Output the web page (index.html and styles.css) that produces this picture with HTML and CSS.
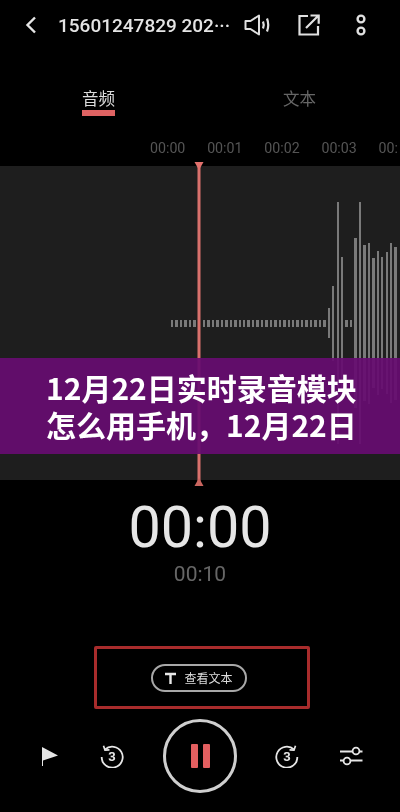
FILE: index.html
```html
<!DOCTYPE html>
<html lang="zh">
<head>
<meta charset="utf-8">
<title>录音</title>
<link rel="stylesheet" href="styles.css">
</head>
<body>
<div class="screen">
  <header class="topbar">
    <svg class="back" width="12" height="18" viewBox="0 0 12 18"><path d="M10 1.500 2.500 9l7.500 7.500" fill="none" stroke="#e6e6e6" stroke-width="2.400"/></svg>
    <div class="title">15601247829 202···</div>
    <svg class="speaker" width="26" height="26" viewBox="0 0 26 26" fill="none" stroke="#e0e0e0" stroke-width="2"><path d="M1.500 9h5L15 3.500v19L6.500 17h-5z" stroke-linejoin="round"/><path d="M19 9.500q1.500 3.500 0 7" stroke-width="2.200"/><path d="M23 6.500q2.500 6.500 0 13" stroke-width="2.200"/></svg>
    <svg class="share" width="22" height="22" viewBox="0 0 22 22" fill="none" stroke="#e0e0e0" stroke-width="2.200"><path d="M10 2H1.500v18.500H20V12"/><path d="M8 14 20 2M12.500 1.500h8.200v8.200"/></svg>
    <svg class="more" width="12" height="22" viewBox="0 0 12 22" fill="none" stroke="#e0e0e0" stroke-width="2.400"><circle cx="6" cy="5" r="3.400"/><circle cx="6" cy="17" r="3.400"/></svg>
  </header>

  <nav class="tabs">
    <div class="tab tab-active">音频</div>
    <div class="tab">文本</div>
  </nav>

  <div class="ticks">
    <span>00:00</span><span>00:01</span><span>00:02</span><span>00:03</span><span>00:</span>
  </div>

  <section class="wave">
    <div class="bars bars-a">
      <i style="height:7px"></i><i style="height:7px"></i><i style="height:7px"></i><i style="height:7px"></i><i style="height:7px"></i><i style="height:7px"></i>
    </div>
    <div class="bars bars-b">
      <i style="height:7px"></i><i style="height:7px"></i><i style="height:7px"></i><i style="height:7px"></i><i style="height:7px"></i><i style="height:7px"></i><i style="height:7px"></i>
      <i style="height:7px"></i><i style="height:7px"></i><i style="height:7px"></i><i style="height:7px"></i><i style="height:7px"></i><i style="height:7px"></i><i style="height:7px"></i>
      <i style="height:7px"></i><i style="height:7px"></i><i style="height:7px"></i><i style="height:7px"></i><i style="height:7px"></i><i style="height:7px"></i><i style="height:7px"></i>
      <i style="height:7px"></i><i style="height:7px"></i><i style="height:7px"></i><i style="height:7px"></i><i style="height:7px"></i><i style="height:7px"></i><i style="height:7px"></i>
      <i style="height:30px"></i><i style="height:75px"></i><i style="height:242px"></i><i style="height:132px"></i>
      <i style="height:7px"></i><i style="height:7px"></i>
      <i style="height:170px"></i><i style="height:242px"></i><i style="height:156px"></i><i style="height:161px"></i><i style="height:130px"></i><i style="height:144px"></i><i style="height:132px"></i><i style="height:142px"></i><i style="height:160px"></i><i style="height:153px"></i>
    </div>
    <svg class="playhead" width="12" height="326" viewBox="0 0 12 326">
      <rect x="4.500" y="2" width="3" height="320" fill="#d9716c"/>
      <path d="M1.500 1h9L6 9z" fill="#e2716d"/>
      <path d="M1.500 325h9L6 317z" fill="#c9655f"/>
    </svg>
  </section>

  <div class="clock">00:00</div>
  <div class="total">00:10</div>

  <div class="highlight">
    <div class="pill">
      <svg width="11" height="12" viewBox="0 0 11 12" fill="none" stroke="#e8e8e8" stroke-width="2.400"><path d="M0 2h11M5.500 2v10"/></svg>
      <span>查看文本</span>
    </div>
  </div>

  <footer class="controls">
    <svg class="ctl-flag" width="18" height="21" viewBox="0 0 18 21"><path d="M1 1 17 9.500 2 14.500V20H1z" fill="#e6e6e6"/></svg>
    <svg class="ctl-back" width="24" height="24" viewBox="0 0 24 24" fill="none" stroke="#e6e6e6" stroke-width="1.800"><path d="M5 5.500A10.500 10.500 0 1 1 1.700 13"/><path d="M3.500 1.800 5 6.200l4.500-.4" stroke-width="1.700"/><text x="12" y="17" text-anchor="middle" class="num">3</text></svg>
    <button class="pause"><i></i><i></i></button>
    <svg class="ctl-fwd" width="24" height="24" viewBox="0 0 24 24" fill="none" stroke="#e6e6e6" stroke-width="1.800"><path d="M19 5.500A10.500 10.500 0 1 0 22.300 13"/><path d="M20.500 1.800 19 6.200l-4.500-.4" stroke-width="1.700"/><text x="12" y="17" text-anchor="middle" class="num">3</text></svg>
    <svg class="ctl-adjust" width="24" height="22" viewBox="0 0 24 22" fill="none" stroke="#e6e6e6" stroke-width="1.800"><path d="M1 6.500h13M20 6.500h3.500M1 15.500h3.500M11 15.500h12.500"/><circle cx="17" cy="6" r="3.400"/><circle cx="8" cy="16" r="3.400"/></svg>
  </footer>

  <div class="banner">
    <div class="banner-line">12月22日实时录音模块</div>
    <div class="banner-line">怎么用手机，12月22日</div>
  </div>
</div>
</body>
</html>
```

FILE: styles.css
```css
* { box-sizing: border-box; }
html, body { margin: 0; padding: 0; background: #000; }
body { font-family: Roboto, "Noto Sans CJK SC", sans-serif; }

.screen {
  position: relative;
  width: 400px;
  height: 812px;
  overflow: hidden;
  background: #000;
  display: flex;
  flex-direction: column;
  filter: blur(0.3px);
}

.topbar {
  height: 50px;
  display: flex;
  align-items: center;
  padding-left: 25px;
  flex: none;
}
.title {
  margin-left: 21px;
  width: 186px;
  font-size: 19px;
  font-weight: 500;
  color: #e4e4e4;
  white-space: nowrap;
}
.speaker { margin-left: 0; }
.share { margin-left: 28px; }
.more { margin-left: 35px; }

.tabs {
  display: flex;
  height: 66px;
  padding-top: 39px;
  padding-left: 82px;
  flex: none;
}
.tab {
  width: 34px;
  height: 27px;
  font-family: "Noto Sans CJK SC", sans-serif;
  font-size: 16.500px;
  line-height: 19px;
  text-align: center;
  color: #666;
  margin-right: 168px;
  white-space: nowrap;
}
.tab-active {
  color: #ddd;
  border-bottom: 6px solid #df6363;
}

.ticks {
  height: 50px;
  flex: none;
  display: flex;
  gap: 21.800px;
  padding: 23px 0 0 150px;
  font-size: 14.200px;
  line-height: 18px;
  color: #555;
  white-space: nowrap;
}

.wave {
  position: relative;
  height: 314px;
  flex: none;
  background: #1e1e1e;
  display: flex;
  align-items: center;
}
.bars { display: flex; align-items: center; flex: none; }
.bars i { display: block; width: 2.400px; background: #7a7a7a; flex: none; }
.bars-a { gap: 2.070px; margin-left: 171px; }
.bars-b { gap: 2.070px; margin-left: 7.300px; }

.playhead {
  position: absolute;
  left: 193px;
  top: -5px;
}

.clock {
  margin-top: 15px;
  text-align: center;
  font-size: 57.500px;
  line-height: 66px;
  color: #e6e6e6;
  flex: none;
}
.total {
  margin-top: 1px;
  text-align: center;
  font-size: 21px;
  line-height: 25px;
  color: #666;
  flex: none;
}

.highlight {
  margin: 59px 0 0 94px;
  width: 216px;
  height: 63px;
  border: 3px solid #a82c2c;
  border-radius: 2px;
  display: flex;
  align-items: center;
  justify-content: center;
  padding-right: 6px;
  flex: none;
}
.pill {
  width: 96px;
  height: 28px;
  border: 2px solid #a8a8a8;
  border-radius: 14px;
  display: flex;
  align-items: center;
  justify-content: center;
  gap: 8px;
  font-family: "Noto Sans CJK SC", sans-serif;
  font-size: 12px;
  color: #ddd;
}

.controls {
  flex: none;
  margin-top: 9px;
  height: 76px;
  display: flex;
  align-items: center;
  padding-left: 41px;
}
.ctl-back { margin-left: 41px; }
.pause {
  margin-left: 39px;
  width: 74px;
  height: 74px;
  border: 3px solid #cfcfcf;
  border-radius: 50%;
  background: none;
  padding: 0;
  display: flex;
  align-items: center;
  justify-content: center;
  gap: 5px;
  flex: none;
}
.pause i {
  display: block;
  width: 7px;
  height: 24px;
  background: #e35f60;
  border-radius: 1px;
}
.ctl-fwd { margin-left: 38px; }
.ctl-adjust { margin-left: 40px; }
.num {
  font-family: Roboto, sans-serif;
  font-size: 13px;
  font-weight: 700;
  fill: #e6e6e6;
  stroke: none;
}

.banner {
  position: absolute;
  left: 0;
  top: 358px;
  width: 400px;
  height: 96px;
  padding: 11px 0 0 46px;
  background: rgba(102, 12, 112, 0.93);
}
.banner-line {
  font-family: "Noto Sans CJK SC", sans-serif;
  font-weight: 700;
  font-size: 30px;
  line-height: 37px;
  color: #fff;
  white-space: nowrap;
}
```
